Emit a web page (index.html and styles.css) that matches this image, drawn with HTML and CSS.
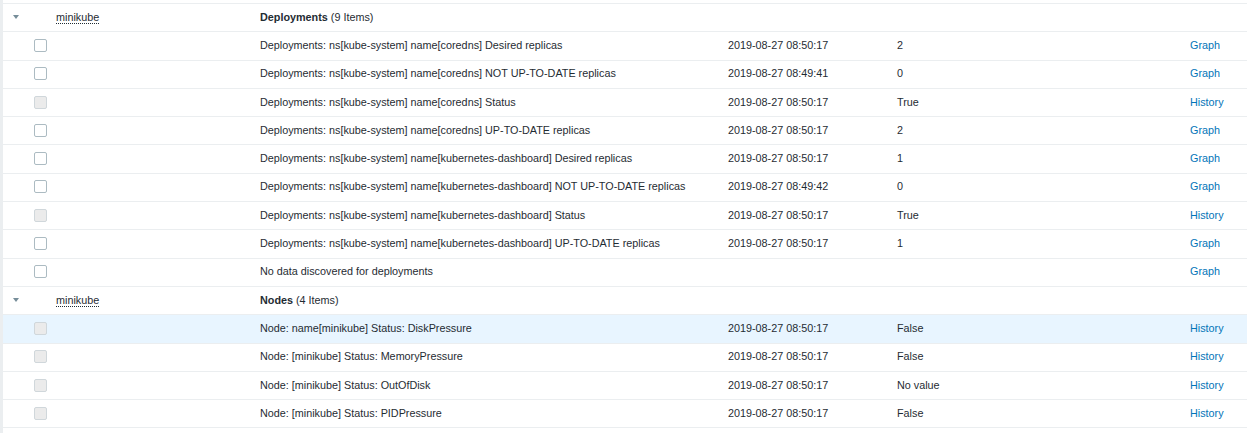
FILE: index.html
```html
<!DOCTYPE html>
<html>
  <head>
    <title>Latest data</title>
    <link rel="stylesheet" href="styles.css">
  </head>
  <body>
    <div class="wrap">
      <table class="list-table">
        <colgroup>
          <col class="c-toggle"><col class="c-check"><col class="c-host"><col class="c-name"><col class="c-time"><col class="c-value"><col class="c-link">
        </colgroup>
        <tbody>
          <tr class="app-row">
            <td><span class="arrow"></span></td>
            <td></td>
            <td><span class="host">minikube</span></td>
            <td><b>Deployments</b> (9 Items)</td>
            <td></td><td></td><td></td>
          </tr>
          <tr>
            <td></td><td><span class="cb"></span></td><td></td>
            <td>Deployments: ns[kube-system] name[coredns] Desired replicas</td>
            <td>2019-08-27 08:50:17</td><td>2</td><td><a href="#">Graph</a></td>
          </tr>
          <tr>
            <td></td><td><span class="cb"></span></td><td></td>
            <td>Deployments: ns[kube-system] name[coredns] NOT UP-TO-DATE replicas</td>
            <td>2019-08-27 08:49:41</td><td>0</td><td><a href="#">Graph</a></td>
          </tr>
          <tr>
            <td></td><td><span class="cb disabled"></span></td><td></td>
            <td>Deployments: ns[kube-system] name[coredns] Status</td>
            <td>2019-08-27 08:50:17</td><td>True</td><td><a href="#">History</a></td>
          </tr>
          <tr>
            <td></td><td><span class="cb"></span></td><td></td>
            <td>Deployments: ns[kube-system] name[coredns] UP-TO-DATE replicas</td>
            <td>2019-08-27 08:50:17</td><td>2</td><td><a href="#">Graph</a></td>
          </tr>
          <tr>
            <td></td><td><span class="cb"></span></td><td></td>
            <td>Deployments: ns[kube-system] name[kubernetes-dashboard] Desired replicas</td>
            <td>2019-08-27 08:50:17</td><td>1</td><td><a href="#">Graph</a></td>
          </tr>
          <tr>
            <td></td><td><span class="cb"></span></td><td></td>
            <td>Deployments: ns[kube-system] name[kubernetes-dashboard] NOT UP-TO-DATE replicas</td>
            <td>2019-08-27 08:49:42</td><td>0</td><td><a href="#">Graph</a></td>
          </tr>
          <tr>
            <td></td><td><span class="cb disabled"></span></td><td></td>
            <td>Deployments: ns[kube-system] name[kubernetes-dashboard] Status</td>
            <td>2019-08-27 08:50:17</td><td>True</td><td><a href="#">History</a></td>
          </tr>
          <tr>
            <td></td><td><span class="cb"></span></td><td></td>
            <td>Deployments: ns[kube-system] name[kubernetes-dashboard] UP-TO-DATE replicas</td>
            <td>2019-08-27 08:50:17</td><td>1</td><td><a href="#">Graph</a></td>
          </tr>
          <tr>
            <td></td><td><span class="cb"></span></td><td></td>
            <td>No data discovered for deployments</td>
            <td></td><td></td><td><a href="#">Graph</a></td>
          </tr>
          <tr class="app-row">
            <td><span class="arrow"></span></td>
            <td></td>
            <td><span class="host">minikube</span></td>
            <td><b>Nodes</b> (4 Items)</td>
            <td></td><td></td><td></td>
          </tr>
          <tr class="hover">
            <td></td><td><span class="cb disabled"></span></td><td></td>
            <td>Node: name[minikube] Status: DiskPressure</td>
            <td>2019-08-27 08:50:17</td><td>False</td><td><a href="#">History</a></td>
          </tr>
          <tr>
            <td></td><td><span class="cb disabled"></span></td><td></td>
            <td>Node: [minikube] Status: MemoryPressure</td>
            <td>2019-08-27 08:50:17</td><td>False</td><td><a href="#">History</a></td>
          </tr>
          <tr>
            <td></td><td><span class="cb disabled"></span></td><td></td>
            <td>Node: [minikube] Status: OutOfDisk</td>
            <td>2019-08-27 08:50:17</td><td>No value</td><td><a href="#">History</a></td>
          </tr>
          <tr>
            <td></td><td><span class="cb disabled"></span></td><td></td>
            <td>Node: [minikube] Status: PIDPressure</td>
            <td>2019-08-27 08:50:17</td><td>False</td><td><a href="#">History</a></td>
          </tr>
        </tbody>
      </table>
    </div>
  </body>
</html>
```

FILE: styles.css
```css
html, body {
  margin: 0px;
  padding: 0px;
  height: 100%;
  overflow: hidden;
}
body {
  background-color: #ebeef0;
  padding-left: 3px;
  font-family: "Liberation Sans", Arial, sans-serif;
  font-size: 10.8px;
  color: #1f2c33;
}
.wrap {
  background-color: #fff;
  height: 100%;
  padding-top: 3px;
  box-sizing: border-box;
}
.list-table {
  width: 1244px;
  table-layout: fixed;
  border-collapse: collapse;
  border-top: 1px solid #ebeef0;
}
.c-toggle { width: 26px; }
.c-check { width: 22px; }
.c-host { width: 204px; }
.c-name { width: 468px; }
.c-time { width: 169px; }
.c-value { width: 293px; }
.c-link { width: 62px; }

.list-table tr {
  height: 28.3px;
  border-bottom: 1px solid #ebeef0;
}
.list-table td {
  padding: 0px 5px 1px;
  line-height: 13px;
  white-space: nowrap;
  vertical-align: middle;
}
.list-table tr.hover {
  background-color: #e8f5ff;
}
.list-table a {
  color: #0275b8;
  text-decoration: none;
}
.list-table b {
  font-weight: bold;
}
.arrow {
  display: inline-block;
  width: 0px;
  height: 0px;
  margin-left: 5px;
  margin-bottom: 2px;
  border-left: 3px solid transparent;
  border-right: 3px solid transparent;
  border-top: 4px solid #768d99;
}
.host {
  border-bottom: 1px dotted #1f2c33;
}
.cb {
  display: block;
  width: 11px;
  height: 11px;
  border: 1px solid #acbbc2;
  border-radius: 2px;
  background-color: #fff;
}
.cb.disabled {
  background-color: #ebebeb;
  border-color: #d0d7db;
}
```
